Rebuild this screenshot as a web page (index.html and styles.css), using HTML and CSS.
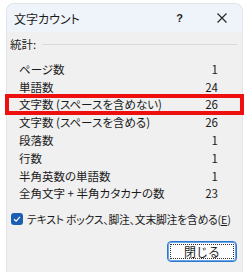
FILE: index.html
```html
<!DOCTYPE html>
<html lang="ja">

<head>
  <meta charset="UTF-8" />
  <title>文字カウント</title>
  <link rel="stylesheet" href="styles.css">
</head>

<body>
  <div class="dialog">
    <div class="titlebar">
      <span class="title">文字カウント</span>
      <span class="help">?</span>
      <svg class="close-x" width="10" height="10" viewBox="0 0 10 10">
        <path d="M0.5 0.5 L9.5 9.5 M9.5 0.5 L0.5 9.5" stroke="#222" stroke-width="1.1" fill="none" />
      </svg>
    </div>

    <div class="content">
      <div class="group-head">
        <span>統計:</span>
        <div class="rule"></div>
      </div>

      <div class="stats">
        <div class="row"><span>ページ数</span><span>1</span></div>
        <div class="row"><span>単語数</span><span>24</span></div>
        <div class="row highlight"><span>文字数 (スペースを含めない)</span><span>26</span></div>
        <div class="row"><span>文字数 (スペースを含める)</span><span>26</span></div>
        <div class="row"><span>段落数</span><span>1</span></div>
        <div class="row"><span>行数</span><span>1</span></div>
        <div class="row"><span>半角英数の単語数</span><span>1</span></div>
        <div class="row"><span>全角文字 + 半角カタカナの数</span><span>23</span></div>
      </div>

      <label class="check">
        <span class="box">
          <svg width="8" height="8" viewBox="0 0 8 8">
            <path d="M1 4.2 L3.1 6.2 L7 1.8" stroke="#fff" stroke-width="1.2" fill="none" />
          </svg>
        </span>
        <span class="check-text">テキスト ボックス、脚注、文末脚注を含める(<u>E</u>)</span>
      </label>

      <div class="buttons">
        <button class="btn"><span class="focus">閉じる</span></button>
      </div>
    </div>
  </div>
</body>

</html>
```

FILE: styles.css
```css
* {
  box-sizing: border-box;
}

html,
body {
  margin: 0;
  padding: 0;
  background: #fff;
  font-family: "Noto Sans CJK JP", "Noto Sans", sans-serif;
  font-size: 11.5px;
  color: #1b1b1b;
  font-feature-settings: "palt";
}

.dialog {
  width: 235px;
  height: 268px;
  margin: 4px 0 0 7px;
  background: #f0f0f0;
  border-radius: 7px 7px 0 0;
  box-shadow: 0 0 0 1px #e2e4e6;
  display: flex;
  flex-direction: column;
}

.titlebar {
  height: 28px;
  background: #eef4f9;
  border-radius: 7px 7px 0 0;
  display: flex;
  align-items: center;
  padding: 0 15px 0 7px;
}

.title {
  flex: 1;
  font-size: 12px;
}

.help {
  font-family: "Liberation Sans", sans-serif;
  font-weight: bold;
  font-size: 11px;
  margin-right: 34px;
}

.content {
  display: flex;
  flex-direction: column;
}

.group-head {
  display: flex;
  align-items: center;
  gap: 6px;
  height: 16px;
  margin: 4px 5px 0 3px;
}

.rule {
  flex: 1;
  height: 1px;
  background: #d9d9d9;
}

.stats {
  margin-top: 8px;
  display: flex;
  flex-direction: column;
}

.row {
  height: 17.8px;
  display: flex;
  align-items: center;
  justify-content: space-between;
  padding: 0 24px 0 12px;
}

.highlight {
  outline: 4px solid #ee0f0f;
  outline-offset: -2px;
}

.check {
  display: flex;
  align-items: center;
  gap: 4px;
  margin: 9px 0 0 4px;
  height: 16px;
}

.check-text {
  font-size: 10.8px;
  white-space: nowrap;
  letter-spacing: -0.2px;
}

.box {
  flex: none;
  width: 12px;
  height: 12px;
  border-radius: 3px;
  background: #1a5fb4;
  display: flex;
  align-items: center;
  justify-content: center;
}

.buttons {
  display: flex;
  justify-content: flex-end;
  padding-right: 5px;
  margin-top: 14px;
}

.btn {
  width: 70px;
  height: 21px;
  padding: 2px;
  border: 1px solid #2a78d0;
  border-radius: 4px;
  background: #fdfdfd;
  box-shadow: inset 0 0 0 1px #6aa6e6;
  font-family: inherit;
  font-size: 12px;
  color: #1b1b1b;
  display: flex;
}

.focus {
  flex: 1;
  border: 1px dotted #333;
  display: flex;
  align-items: center;
  justify-content: center;
}
```
